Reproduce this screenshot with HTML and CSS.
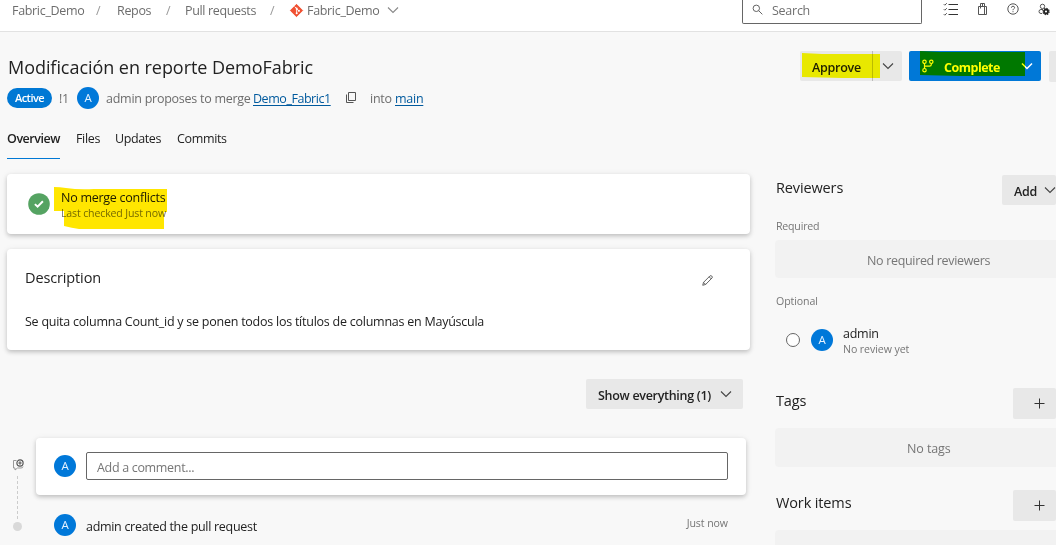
FILE: index.html
```html
<!DOCTYPE html>
<html lang="en">
<head>
<meta charset="utf-8">
<title>Pull request - Modificación en reporte DemoFabric</title>
<link rel="stylesheet" href="styles.css">
</head>
<body>
<div class="page">
  <header class="topbar">
    <nav class="crumbs">
      <span class="crumb c1">Fabric_Demo</span><span class="slash">/</span>
      <span class="crumb c2">Repos</span><span class="slash">/</span>
      <span class="crumb c3">Pull requests</span><span class="slash">/</span>
      <svg class="git" viewBox="0 0 14 14"><path d="M7 .4 13.6 7 7 13.6.4 7Z" fill="#f05133" stroke="#f05133" stroke-linejoin="round"/><path d="M5 2.8 7.2 5V10.300M7.200 5.200 9.600 7.400" fill="none" stroke="#fff"/><circle cx="7.200" cy="5" r="1.100" fill="#fff"/><circle cx="7.200" cy="10" r="1.100" fill="#fff"/><circle cx="9.600" cy="7.400" r="1.100" fill="#fff"/></svg>
      <span class="crumb c4">Fabric_Demo</span>
      <svg class="chev pale" viewBox="0 0 12 8"><path d="M1 1.500 6 6.500 11 1.500"/></svg>
    </nav>
    <div class="search">
      <svg class="ic" viewBox="0 0 12 12"><circle cx="4.700" cy="4.700" r="3.500"/><path d="M7.300 7.300 11.300 11.300"/></svg>
      <span>Search</span>
    </div>
    <div class="tools">
      <svg class="ic list" viewBox="0 0 16 13"><path d="M5.500 1.500H15M5.500 6.500H15M5.500 11.500H15" stroke="#333"/><path d="M.8 1.200 1.800 2.200 3.800.2M.8 6.200 1.800 7.200 3.800 5.200M.8 11.200 1.800 12.200 3.800 10.200"/></svg>
      <svg class="ic bag" viewBox="0 0 12 14"><path d="M1.500 4.500H9.500V12.500H1.500ZM3.500 6.500V1.500H7.500V6.500M5.500 1.500V4.500M7.500 4.500V12.500"/></svg>
      <svg class="ic help" viewBox="0 0 12 12"><circle cx="6" cy="6" r="5.200"/><path d="M4.400 4.700Q4.500 3.200 6 3.200T7.600 4.700C7.600 5.700 6 5.800 6 7.200M6 8.200V9.200"/></svg>
      <svg class="ic user" viewBox="0 0 14 14"><circle cx="4.500" cy="3.400" r="2.200"/><path d="M5 6.500H3Q1 6.500 1 8.500T3 10.500H4"/><circle cx="8" cy="8.500" r="2" stroke="#222" stroke-width="1.800"/><circle cx="8" cy="8.500" r="3.100" stroke="#222" stroke-width="1.200" stroke-dasharray="1.300 1.135"/></svg>
    </div>
  </header>

  <section class="heading">
    <div class="title-row">
      <h1>Modificación en reporte DemoFabric</h1>
      <div class="actions">
        <div class="approve">
          <span class="label">Approve</span><span class="drop"><svg class="chev" viewBox="0 0 12 8"><path d="M1 1.500 6 6.500 11 1.500"/></svg></span>
          <svg class="marker" viewBox="0 0 78 26"><path d="M0 0 20 1H78V25H40L0 24Z" fill="#ffff00"/></svg>
        </div>
        <div class="complete">
          <svg class="branch" viewBox="0 0 12 14"><circle cx="2.500" cy="2.800" r="1.700"/><circle cx="9.300" cy="2.800" r="1.700"/><circle cx="2.500" cy="11.200" r="1.700"/><path d="M2.500 4.500V9.500M9.300 4.500V5.500Q9.300 7.200 7.500 7.200H2.500"/></svg>
          <span>Complete</span>
          <svg class="chev" viewBox="0 0 12 8"><path d="M1 1.500 6 6.500 11 1.500"/></svg>
          <svg class="marker" viewBox="0 0 105 26"><path d="M0 0 20 1H105V25H40L0 24Z" fill="#ffff00"/></svg>
        </div>
        <div class="more"></div>
      </div>
    </div>
    <div class="meta">
      <span class="pill">Active</span><span class="num">!1</span><span class="avatar">A</span>
      <span class="proposes">admin proposes to merge</span><a class="source">Demo_Fabric1</a>
      <svg class="ic copy" viewBox="0 0 10 11"><path d="M2.500.5H9.500V8.500H2.500ZM.5 2.500V10.500H7.500"/></svg>
      <span class="into">into</span><a class="target">main</a>
    </div>
    <nav class="tabs">
      <span class="tab on">Overview</span><span class="tab files">Files</span><span class="tab updates">Updates</span><span class="tab commits">Commits</span>
    </nav>
  </section>

  <main class="content">
    <div class="main-col">
      <div class="card status">
        <svg class="ok" viewBox="0 0 22 22"><circle cx="11" cy="11" r="10.800" fill="#55a362"/><path d="M6.900 11.100 9.600 13.700 14.900 8.300" fill="none" stroke="#fff" stroke-width="2"/></svg>
        <div class="status-text">
          <div class="conflicts">No merge conflicts</div>
          <div class="small checked">Last checked Just now</div>
          <svg class="marker" viewBox="0 0 114 43"><path d="M0 0Q6 0 12 1 25 3 40 2H113V25H110V42H25Q18 41 10 39V24H0Z" fill="#ffe600"/></svg>
        </div>
      </div>
      <div class="card description">
        <div class="desc-head"><h2>Description</h2>
          <svg class="ic pencil" viewBox="0 0 12 12"><path d="M.8 11.200 1.700 8 8.700 1Q9.700.3 10.700 1.200T11 3.200L4 10.300ZM7.800 2 10 4.200M1.700 8 4 10.300"/></svg></div>
        <p>Se quita columna Count_id y se ponen todos los títulos de columnas en Mayúscula</p>
      </div>
      <div class="filter">
        <span>Show everything (1)</span>
        <svg class="chev" viewBox="0 0 12 8"><path d="M1 1.500 6 6.500 11 1.500"/></svg>
      </div>
      <div class="timeline">
        <div class="rail">
          <svg class="note" viewBox="0 0 13 12"><path d="M4.500 1.500H1.500V9H3V11L5.500 9H9Q11 9 11 7.500" fill="none" stroke="#999"/><circle cx="8" cy="4" r="3.100" fill="#fff" stroke="#555" stroke-width="1.200"/><path d="M8 2.300V5.700M6.300 4H9.700" stroke="#555" stroke-width="1.100"/></svg>
          <span class="dash"></span><span class="dot"></span>
        </div>
        <div class="events">
          <div class="card comment"><span class="avatar">A</span><div class="input">Add a comment...</div></div>
          <div class="event"><span class="avatar">A</span><span class="event-text">admin created the pull request</span><span class="small when">Just now</span></div>
        </div>
      </div>
    </div>
    <aside class="side">
      <div class="side-head"><h2>Reviewers</h2><div class="add"><span>Add</span><svg class="chev" viewBox="0 0 12 8"><path d="M1 1.500 6 6.500 11 1.500"/></svg></div></div>
      <div class="small group">Required</div>
      <div class="empty">No required reviewers</div>
      <div class="small group optional">Optional</div>
      <div class="reviewer"><span class="vote"></span><span class="avatar">A</span><div><div class="name">admin</div><div class="small review">No review yet</div></div></div>
      <div class="side-head tags"><h2>Tags</h2><div class="plus"><svg class="ic" viewBox="0 0 11 11"><path d="M5.500 .5V10.500M.5 5.500H10.500"/></svg></div></div>
      <div class="empty tag-empty">No tags</div>
      <div class="side-head work"><h2>Work items</h2><div class="plus"><svg class="ic" viewBox="0 0 11 11"><path d="M5.500 .5V10.500M.5 5.500H10.500"/></svg></div></div>
      <div class="empty work-empty"></div>
    </aside>
  </main>
</div>
</body>
</html>
```
FILE: styles.css
```css
* { box-sizing: border-box; }
body { margin: 0; background: #f8f8f8; overflow: hidden; }
.page {
  width: 1056px; height: 545px; overflow: hidden;
  font: 12.5px/16px "Open Sans", "Noto Sans", sans-serif;
  letter-spacing: -0.26px; color: #222; white-space: nowrap;
}
svg { display: block; flex: none; overflow: visible; }
h1, h2, p { margin: 0; font-weight: 400; }
h2 { font-size: 14.5px; line-height: 20px; letter-spacing: -0.13px; }
.small { font-size: 10.6px; line-height: 14px; letter-spacing: -0.08px; color: #767676; }
.ic { fill: none; stroke: #555; stroke-width: 1; }
.chev { width: 12px; height: 8px; fill: none; stroke: #444; stroke-width: 1.1; }
.chev.pale { stroke: #888; }
.marker { position: absolute; mix-blend-mode: multiply; }
.avatar {
  flex: none; width: 22px; height: 22px; border-radius: 50%;
  background: #0078d9; color: #e5f2ff; font-size: 11.5px; line-height: 22px; text-align: center;
}

/* Top bar */
.topbar { height: 32px; background: #fff; border-bottom: 1px solid #e2e2e2; display: flex; }
.crumbs { display: flex; align-items: center; height: 22px; width: 742px; padding-left: 12px; color: #6d6d6d; }
.crumb { letter-spacing: -0.32px; }
.c1 { width: 84px; }
.c2 { width: 49px; }
.c3 { width: 85px; letter-spacing: -0.35px; }
.slash { width: 21px; color: #999; }
.c1 + .slash { width: 21px; }
.c2 + .slash { width: 19px; }
.c3 + .slash { width: 20px; }
.git { width: 13px; height: 13px; margin: -2px 4px 0 0; }
.c4 { width: 80px; }
.crumbs .chev { margin-top: -3px; }
.search {
  width: 180px; height: 24px; border: 1px solid #666; border-top: 0; border-radius: 0 0 2px 2px;
  display: flex; padding: 3px 0 0 9px; color: #707070;
}
.search .ic { width: 11px; height: 11px; margin: 1px 9px 0 0; }
.tools { display: flex; padding: 3px 0 0 21px; }
.list { width: 16px; height: 13px; margin-right: 18px; }
.bag { width: 12px; height: 14px; margin-right: 18px; margin-top: -1px; }
.help { width: 12px; height: 12px; margin-right: 18px; }
.user { width: 14px; height: 14px; margin-left: 1px; }

/* Title and tabs */
.heading { height: 128px; }
.title-row { display: flex; height: 54px; }
h1 { flex: none; width: 800px; padding: 22px 0 0 8px; font-size: 18px; line-height: 26px; letter-spacing: -0.05px; }
.actions { display: flex; flex: none; padding-top: 19px; font-weight: 600; }
.approve { position: relative; display: flex; width: 102px; height: 30px; background: #e8e8e8; border-radius: 2px; }
.approve .label { width: 73px; padding: 9px 0 0 12px; border-right: 1px solid #bbb; }
.drop { padding: 11px 0 0 9px; }
.approve .marker { width: 78px; height: 26px; left: 2px; top: 2px; }
.complete { position: relative; display: flex; width: 132px; height: 30px; margin-left: 7px; padding-left: 13px; background: #0078d7; color: #fff; border-radius: 2px; font-weight: 700; letter-spacing: -0.5px; }
.complete span { width: 79px; padding: 9px 0 0 10px; }
.branch { width: 12px; height: 14px; margin-top: 8px; fill: none; stroke: #fff; stroke-width: 1.2; }
.complete .chev { stroke: #fff; stroke-width: 1.5; margin: 11px 0 0 8px; }
.complete .marker { width: 105px; height: 26px; left: 11px; top: 0; }
.more { width: 20px; height: 31px; margin-left: 8px; background: #e8e8e8; border-radius: 2px; }
.meta { display: flex; align-items: center; height: 24px; padding-left: 7px; color: #6d6d6d; }
.pill { width: 45px; height: 20px; border-radius: 10px; background: #0078d4; color: #fff; font-size: 11px; font-weight: 600; line-height: 19px; text-align: center; letter-spacing: -0.55px; }
.num { width: 25px; padding-left: 7px; }
.num, .proposes, .source, .into, .target { padding-top: 1px; }
.proposes { width: 154px; padding-left: 7px; }
.source, .target { color: #005a9e; text-decoration: underline; text-underline-offset: 2px; }
.source { width: 93px; letter-spacing: -0.45px; }
.copy { width: 10px; height: 11px; margin-right: 14px; margin-top: -2px; }
.into { width: 25px; }
.tabs { display: flex; margin-top: 21px; padding-left: 7px; height: 28px; }
.tab { width: 62px; }
.on { width: 53px; margin-right: 16px; font-weight: 600; letter-spacing: -0.45px; height: 28px; border-bottom: 1px solid #0078d4; }
.files { width: 39px; letter-spacing: -0.35px; }
.updates { width: 62px; letter-spacing: -0.4px; }
.commits { letter-spacing: -0.35px; }

/* Main column */
.content { display: flex; }
.main-col { width: 743px; margin-left: 7px; padding-top: 14px; }
.card { background: #fff; border-radius: 4px; box-shadow: 0 2px 4px rgba(0,0,0,.2), 0 1px 8px rgba(0,0,0,.06); }
.status { display: flex; height: 60px; padding-left: 21px; }
.ok { width: 22px; height: 22px; margin-top: 19px; }
.status-text { position: relative; padding: 16px 0 0 11px; }
.conflicts { line-height: 16px; }
.checked { letter-spacing: -0.16px; }
.status-text .marker { width: 114px; height: 43px; left: 4px; top: 13px; }
.description { height: 101px; margin-top: 15px; padding: 19px 35px 0 18px; }
.desc-head { display: flex; justify-content: space-between; height: 46px; }
.pencil { width: 11px; height: 11px; margin-top: 7px; margin-right: 2px; }
.description p { letter-spacing: -0.245px; }
.filter { display: flex; width: 157px; height: 30px; margin: 29px 0 0 579px; padding: 9px 0 0 12px; background: #e8e8e8; border-radius: 2px; font-weight: 600; }
.filter span { width: 122px; letter-spacing: -0.3px; }
.filter .chev { margin-top: 2px; }
.timeline { display: flex; margin-top: 29px; }
.rail { width: 29px; padding: 21px 0 0 5px; display: flex; flex-direction: column; }
.note { width: 13px; height: 12px; }
.dash { width: 0; height: 43px; margin: 5px 0 3px 5px; border-left: 1px dashed #ccc; }
.dot { width: 9px; height: 9px; border-radius: 50%; background: #d9d9d9; margin-left: 1px; }
.events { width: 710px; }
.comment { display: flex; height: 57px; padding-left: 18px; }
.comment .avatar { margin-top: 17px; }
.input { width: 642px; height: 28px; margin: 14px 0 0 10px; border: 1px solid #666; border-radius: 2px; padding: 7px 0 0 10px; color: #767676; letter-spacing: -0.32px; }
.event { display: flex; padding: 19px 18px 0; }
.event-text { padding: 5px 0 0 10px; letter-spacing: -0.3px; }
.when { margin-left: auto; padding-top: 2px; }

/* Sidebar */
.side { width: 281px; margin-left: 25px; overflow: hidden; }
.side-head { display: flex; justify-content: space-between; height: 45px; }
.side-head h2 { padding: 18px 0 0 1px; }
.add { display: flex; width: 54px; height: 30px; margin-top: 15px; padding: 9px 0 0 12px; background: #e8e8e8; border-radius: 2px; font-weight: 600; }
.add span { width: 32px; }
.add .chev { margin-top: 2px; }
.group { margin-top: 14px; padding-left: 1px; letter-spacing: -0.2px; }
.empty { height: 38px; margin-top: 7px; padding: 13px 0 0 92px; background: #f2f2f2; border-radius: 4px 0 0 4px; color: #767676; letter-spacing: -0.33px; }
.group.optional { margin-top: 16px; letter-spacing: -0.1px; }
.reviewer { display: flex; padding: 17px 0 0 11px; height: 63px; }
.vote { width: 14px; height: 14px; margin: 8px 11px 0 0; border: 1.5px solid #666; border-radius: 50%; background: #fff; }
.reviewer .avatar { margin: 4px 10px 0 0; }
.name { line-height: 17px; }
.tags { height: 56px; margin-top: 17px; }
.side-head.tags h2, .side-head.work h2 { padding-top: 3px; }
.plus { width: 43px; height: 31px; background: #e8e8e8; border-radius: 2px; padding: 10px 0 0 21px; }
.plus .ic { width: 11px; height: 11px; stroke: #333; }
.tag-empty { height: 39px; margin-top: -16px; padding-left: 132px; letter-spacing: -0.1px; }
.work { height: 40px; margin-top: 23px; }
.work-empty { margin-top: 0; }
```
